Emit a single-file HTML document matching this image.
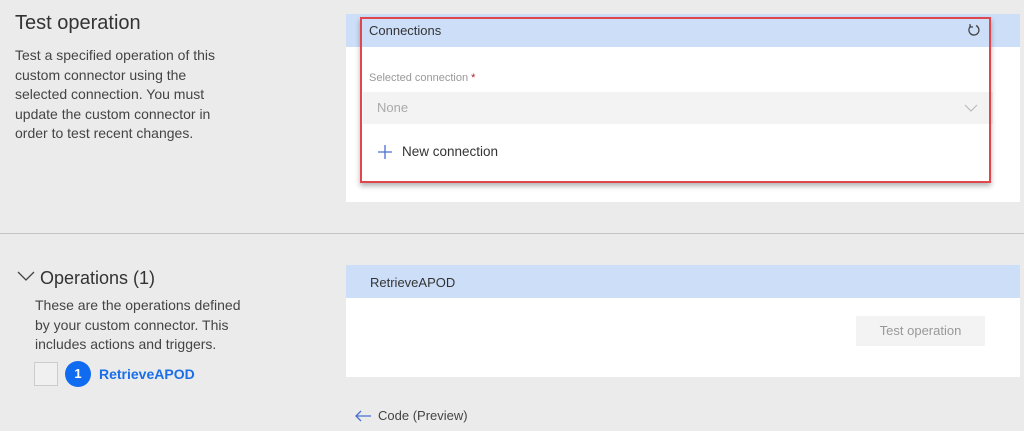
<!DOCTYPE html><html><head><style>
body{margin:0;width:1024px;height:431px;background:#ebebeb;font-family:"Liberation Sans",sans-serif;position:relative;overflow:hidden;color:#333}
.a{position:absolute}
</style></head><body>
<div class="a" style="left:15px;top:12px;font-size:20px;color:#333">Test operation</div>
<div class="a" style="left:15px;top:46px;width:220px;font-size:14px;line-height:19.5px;color:#444">Test a specified operation of this custom connector using the selected connection. You must update the custom connector in order to test recent changes.</div>
<div class="a" style="left:346px;top:14px;width:674px;height:188px;background:#fff"></div>
<div class="a" style="left:346px;top:14px;width:674px;height:33px;background:#cddff8"></div>
<div class="a" style="left:369px;top:23px;font-size:13px;color:#333">Connections</div>
<svg class="a" style="left:967px;top:23px" width="14" height="14" viewBox="0 0 14 14"><path d="M4 3A5 5 0 1 0 9 2.5" fill="none" stroke="#444" stroke-width="1.3"/><path d="M3 1v3h3" fill="none" stroke="#444" stroke-width="1.2"/></svg>
<div class="a" style="left:369px;top:72px;font-size:11px;color:#999">Selected connection <span style="color:#a4262c">*</span></div>
<div class="a" style="left:363px;top:92px;width:630px;height:32px;background:#f3f3f3"></div>
<div class="a" style="left:377px;top:100px;font-size:13px;color:#aaa">None</div>
<svg class="a" style="left:964px;top:103px" width="14" height="10"><path d="M1 2l6 6 6-6" fill="none" stroke="#bbb" stroke-width="1.2"/></svg>
<svg class="a" style="left:377px;top:144px" width="16" height="16"><path d="M8 1v14M1 8h14" stroke="#4a6fd4" stroke-width="1.3"/></svg>
<div class="a" style="left:402px;top:144px;font-size:13.5px;color:#333">New connection</div>
<div class="a" style="left:360px;top:17px;width:627px;height:162px;border:2px solid #e0474c;box-shadow:0 3px 5px rgba(0,0,0,.3)"></div>
<div class="a" style="left:0;top:233px;width:1024px;height:1px;background:#c4c4c4"></div>
<svg class="a" style="left:17px;top:271px" width="18" height="12"><path d="M1 1l8 8 8-8" fill="none" stroke="#444" stroke-width="1.3"/></svg>
<div class="a" style="left:40px;top:268px;font-size:18px;color:#333">Operations (1)</div>
<div class="a" style="left:35px;top:296px;width:216px;font-size:14px;line-height:19.5px;color:#444">These are the operations defined by your custom connector. This includes actions and triggers.</div>
<div class="a" style="left:34px;top:362px;width:22px;height:22px;border:1px solid #ccc;background:#f0f0f0"></div>
<div class="a" style="left:65px;top:361px;width:26px;height:26px;border-radius:50%;background:#0f6cf0;color:#fff;font-weight:bold;font-size:13px;text-align:center;line-height:26px">1</div>
<div class="a" style="left:99px;top:366px;font-size:14px;font-weight:bold;color:#1a6fe8">RetrieveAPOD</div>
<div class="a" style="left:346px;top:265px;width:674px;height:112px;background:#fff"></div>
<div class="a" style="left:346px;top:265px;width:674px;height:33px;background:#cddff8"></div>
<div class="a" style="left:370px;top:275px;font-size:13px;color:#333">RetrieveAPOD</div>
<div class="a" style="left:856px;top:316px;width:129px;height:30px;background:#f3f3f3;color:#999;font-size:13px;text-align:center;line-height:30px">Test operation</div>
<svg class="a" style="left:354px;top:409px" width="18" height="14"><path d="M17 7H2M7 2L2 7l5 5" fill="none" stroke="#4a6fd4" stroke-width="1.3"/></svg>
<div class="a" style="left:378px;top:408px;font-size:13px;color:#444">Code (Preview)</div>
</body></html>
